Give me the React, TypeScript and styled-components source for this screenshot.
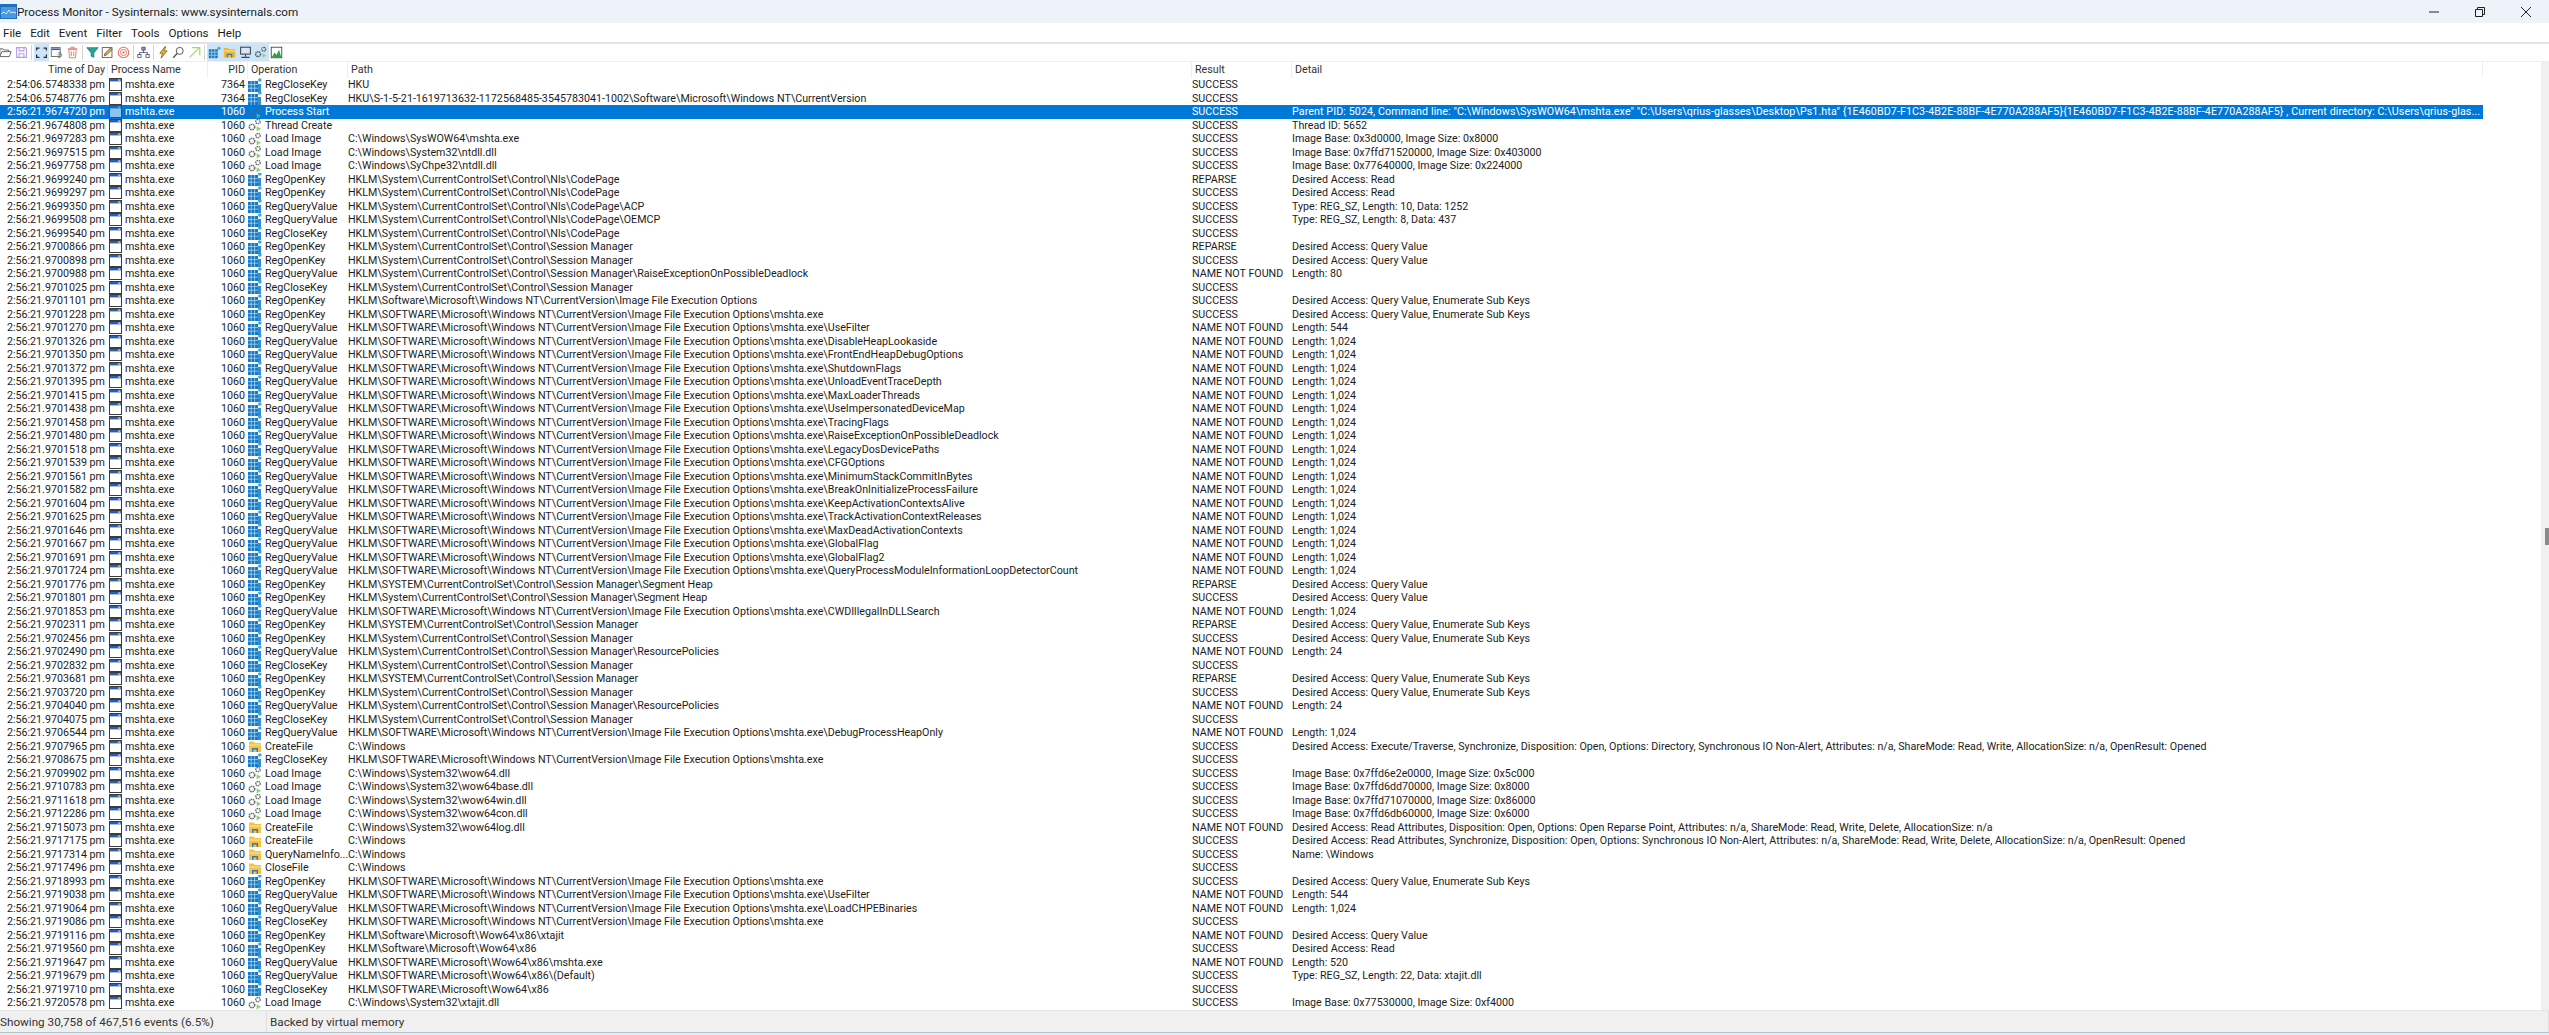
import styled, { createGlobalStyle } from "styled-components";

const GlobalStyle = createGlobalStyle`
  *, *::before, *::after {
    box-sizing: border-box;
  }

  html, body {
    margin: 0;
    padding: 0;
    background: #fff;
    overflow: hidden;
  }
`;

const COLUMNS = "108px 100px 40px 100px 844px 100px 1191px";

const Window = styled.div`
  width: 2549px;
  height: 1035px;
  display: flex;
  flex-direction: column;
  font-family: Roboto, "Noto Sans", sans-serif;
  color: #1c1c1c;
  overflow: hidden;
`;

const TitleBar = styled.div`
  height: 23px;
  flex: none;
  background: #eef3f9;
  display: flex;
  align-items: center;
  font-size: 11.7px;
`;

const TitleText = styled.span`
  flex: 1;
`;

const WinButton = styled.span`
  width: 46px;
  height: 23px;
  display: flex;
  align-items: center;
  justify-content: center;
`;

const MenuBar = styled.div`
  height: 21px;
  flex: none;
  display: flex;
  align-items: center;
  gap: 9px;
  padding-left: 3px;
  font-size: 11.6px;
  border-bottom: 2px solid #e2e2e2;
`;

const Toolbar = styled.div`
  height: 18px;
  flex: none;
  display: flex;
  align-items: center;
  margin-left: -2px;
  border-bottom: 1px solid #eeeeee;
`;

const ToolButton = styled.span<{ $on?: boolean }>`
  width: 15.5px;
  height: 17px;
  flex: none;
  display: flex;
  align-items: center;
  justify-content: center;
  background: ${(p) => (p.$on ? "#cce4f7" : "transparent")};
`;

const ToolSep = styled.span`
  width: 4.5px;
  flex: none;
  display: flex;
  justify-content: center;

  &::before {
    content: "";
    width: 1px;
    height: 15px;
    background: #d4d4d4;
  }
`;

const ToolIcon = styled.svg`
  display: block;
`;

const Main = styled.div`
  flex: 1;
  min-height: 0;
  display: flex;
`;

const ListArea = styled.div`
  flex: 1;
  min-width: 0;
  overflow: hidden;
`;

const HeaderRow = styled.div`
  height: 16px;
  display: grid;
  grid-template-columns: ${COLUMNS};
  font-size: 10.7px;
  line-height: 16px;
  color: #333;
`;

const HeaderCell = styled.div<{ $right?: boolean }>`
  padding: 0 2px 0 3px;
  text-align: ${(p) => (p.$right ? "right" : "left")};
  border-right: 1px solid #eeeeee;
  overflow: hidden;
  white-space: nowrap;
`;

const Rows = styled.div`
  display: grid;
  grid-auto-rows: 13.5px;
  justify-content: start;
`;

const Row = styled.div<{ $selected?: boolean }>`
  display: grid;
  grid-template-columns: ${COLUMNS};
  width: 2483px;
  font-size: 10.7px;
  line-height: 13.5px;
  background: ${(p) => (p.$selected ? "#0078d7" : "transparent")};
  color: ${(p) => (p.$selected ? "#fff" : "#1c1c1c")};
`;

const TextCell = styled.div`
  overflow: hidden;
  white-space: nowrap;
`;

const DetailCell = styled(TextCell)<{ $selected?: boolean }>`
  letter-spacing: ${(p) => (p.$selected ? "0.09px" : "normal")};
`;

const TimeCell = styled(TextCell)`
  text-align: right;
  padding-right: 3px;
`;

const PidCell = styled(TextCell)`
  text-align: right;
  padding-right: 3px;
`;

const IconCell = styled(TextCell)`
  display: flex;
  align-items: center;
  gap: 3px;
`;

const GlyphBox = styled.span<{ $selected?: boolean }>`
  flex: none;
  width: 14px;
  height: 13.5px;
  display: flex;
  align-items: center;
  justify-content: center;
  opacity: ${(p) => (p.$selected ? 0.55 : 1)};
`;

const ScrollTrack = styled.div`
  width: 8px;
  flex: none;
  background: #f0f0f0;
  padding-top: 466px;
  display: flex;
  justify-content: flex-end;
`;

const ScrollThumb = styled.div`
  width: 4px;
  height: 17px;
  background: #8a8a8a;
`;

const StatusBar = styled.div`
  height: 22px;
  flex: none;
  display: flex;
  align-items: center;
  background: #f0f0f0;
  border-top: 1px solid #e4e4e4;
  font-size: 11.7px;
  color: #333;
`;

const StatusPane = styled.div<{ $width: number }>`
  width: ${(p) => p.$width}px;
  height: 100%;
  padding-left: ${(p) => (p.$width > 300 ? 3 : 0)}px;
  display: flex;
  align-items: center;
  border-right: 1px solid #e0e0e0;
  white-space: nowrap;
`;

const BottomEdge = styled.div`
  height: 3px;
  flex: none;
  background: #e3eef8;
  border-top: 1px solid #b8c0c8;
`;

const ProcessIcon = () => (
  <svg width="13" height="13" viewBox="0 0 13 13">
    <rect x="0.5" y="0.5" width="12" height="12" fill="#fff" stroke="#3c3c3c" />
    <rect x="1" y="1" width="11" height="2.4" fill="#2a5bb0" />
    <rect x="9" y="1.5" width="2.4" height="1.2" fill="#cfe0f5" />
  </svg>
);

const RegistryIcon = () => (
  <svg width="14" height="14" viewBox="0 0 14 14">
    <path d="M0 3h10v11H0z" fill="#1478c4" />
    <path d="M3.2 3v11M6.6 3v11M0 6.6h10M0 10.2h10" stroke="#bfe0f5" strokeWidth="0.7" />
    <path d="M10 6h3v8h-3z" fill="#2f8fd6" />
    <circle cx="11.8" cy="2" r="1.8" fill="#34a7e6" />
  </svg>
);

const GearsIcon = () => (
  <svg width="14" height="14" viewBox="0 0 14 14">
    <circle cx="4" cy="9" r="2.7" fill="none" stroke="#6b6b6b" strokeWidth="1.6" strokeDasharray="1.6 0.6" />
    <circle cx="10" cy="3.6" r="2.2" fill="none" stroke="#6b6b6b" strokeWidth="1.4" strokeDasharray="1.4 0.6" />
    <path d="M8.6 8.2l4.4 2.6-4.4 2.8z" fill="#8fd07c" />
  </svg>
);

const FileIcon = () => (
  <svg width="14" height="14" viewBox="0 0 14 14">
    <path d="M1 2.5h4.5l1.5 1.6h6V13H1z" fill="#f6c244" />
    <path d="M1 5.5h12v1.2H1z" fill="#fbe08f" />
    <path d="M4 9h6v4H8.6v-2.6H5.4V13H4z" fill="#2b7cc9" />
  </svg>
);

const opIcons: Record<string, () => React.JSX.Element> = {
  reg: RegistryIcon,
  proc: GearsIcon,
  file: FileIcon,
};

const opKind = (op: string) => {
  if (op.startsWith("Reg")) return "reg";
  if (op.includes("File") || op.startsWith("QueryName")) return "file";
  return "proc";
};

// ---- toolbar icons ----
const toolIcons: Record<string, React.ReactNode> = {
  open: <path d="M1 13V3.5h4l1.2 1.5H12v2M1 13l2.4-6H15l-2.4 6z" fill="none" stroke="#4a4a4a" strokeWidth="1" />,
  save: (
    <g fill="none" stroke="#b79be6" strokeWidth="1.3">
      <path d="M2 2h11l1 1v11H2z" />
      <path d="M5 2v4h6V2M5 14V9.5h6V14" />
    </g>
  ),
  capture: <path d="M2 5.5V2.5h3.5M10.5 2.5H14v3M14 10.5V14h-3.5M5.5 14H2v-3.5" fill="none" stroke="#232f3e" strokeWidth="1.5" />,
  scroll: (
    <g fill="none" strokeWidth="1">
      <rect x="1.5" y="2" width="11" height="11" stroke="#555" />
      <path d="M2 3h10v2H2z" fill="#2a5bb0" stroke="none" />
      <path d="M10 8.5a3 3 0 1 1 -1 4.5M12.5 8v3h-3" stroke="#6d6d6d" />
    </g>
  ),
  clear: (
    <g fill="none" stroke="#e0705e" strokeWidth="1.1">
      <path d="M3.5 4h9l-.7 10.5H4.2zM2 3.5h12M6 3V1.5h4V3M6.5 6.5v6M9.5 6.5v6" />
    </g>
  ),
  filter: <path d="M1 2h14L9.7 8.5V14l-3.4-1.5V8.5z" fill="#2aa39a" stroke="#16736c" strokeWidth="0.8" />,
  edit: (
    <g fill="none">
      <rect x="1.5" y="2" width="12" height="12" stroke="#4a4a4a" />
      <path d="M4 12l1-3 6.5-6.5 2 2L7 11z" fill="#e3b341" stroke="#333" strokeWidth="0.8" />
    </g>
  ),
  target: (
    <g fill="none" stroke="#e8705f">
      <circle cx="8" cy="8" r="6.5" strokeWidth="1.3" />
      <circle cx="8" cy="8" r="3.8" strokeWidth="1.1" />
      <circle cx="8" cy="8" r="1.4" fill="#e8705f" stroke="none" />
    </g>
  ),
  tree: (
    <g fill="#fff" stroke="#47506b" strokeWidth="1">
      <rect x="6" y="1.5" width="4" height="3.5" fill="#8c98b8" />
      <rect x="1" y="10.5" width="4" height="3.5" />
      <rect x="11" y="10.5" width="4" height="3.5" />
      <path d="M8 5v3M3 10.5V8h10v2.5" fill="none" />
    </g>
  ),
  bolt: <path d="M9.5 1L3.5 9h3.4L5 15l7.5-9H8.6L11 1z" fill="#f2b632" stroke="#5b4a1c" strokeWidth="0.8" />,
  find: (
    <g fill="none" stroke="#555" strokeWidth="1.2">
      <circle cx="9.5" cy="6" r="4.3" />
      <path d="M6.3 9.2L1.5 14.5" strokeWidth="1.6" />
    </g>
  ),
  jump: <path d="M2 14L13 3M5 2h9.5v9.5" fill="none" stroke="#a5d86c" strokeWidth="1.5" />,
  regOn: (
    <g>
      <path d="M1 4h11v11H1z" fill="#1478c4" />
      <path d="M4.6 4v11M8.3 4v11M1 7.6h11M1 11.3h11" stroke="#cce4f7" strokeWidth="0.8" />
      <circle cx="13.5" cy="2.8" r="1.9" fill="#34a7e6" />
    </g>
  ),
  fileOn: (
    <g>
      <path d="M1 2.5h5l1.5 1.6H15V14H1z" fill="#f2b632" />
      <path d="M1 5.5h14v1.3H1z" fill="#fbe08f" />
      <path d="M4.5 9.5h7V14H10v-3H6v3H4.5z" fill="#2b7cc9" />
    </g>
  ),
  netOn: (
    <g fill="none" stroke="#3c4655" strokeWidth="1.3">
      <rect x="2" y="1.5" width="12" height="8.5" fill="#dbe6f2" />
      <path d="M8 10v3M3 14h10" />
    </g>
  ),
  procOn: (
    <g fill="none">
      <circle cx="5" cy="10" r="3" stroke="#4b5b6b" strokeWidth="1.8" strokeDasharray="1.8 0.7" />
      <circle cx="12" cy="4" r="2.4" stroke="#4b5b6b" strokeWidth="1.5" strokeDasharray="1.5 0.6" />
      <path d="M10.5 9l4.5 2.7-4.5 2.8z" fill="#8fd07c" />
    </g>
  ),
  profile: (
    <g>
      <rect x="1.5" y="1.5" width="13" height="13" fill="#fff" stroke="#333" />
      <path d="M2 14l3.5-6 2.5 3 3-6.5 3 9.5z" fill="#2f9e44" />
    </g>
  ),
};

type ToolItem = { icon?: string; on?: boolean };

const tools: ToolItem[] = [
  { icon: "open" },
  { icon: "save" },
  {},
  { icon: "capture", on: true },
  { icon: "scroll" },
  { icon: "clear" },
  {},
  { icon: "filter" },
  { icon: "edit" },
  { icon: "target" },
  {},
  { icon: "tree" },
  {},
  { icon: "bolt" },
  { icon: "find" },
  { icon: "jump" },
  {},
  { icon: "regOn", on: true },
  { icon: "fileOn", on: true },
  { icon: "netOn", on: true },
  { icon: "procOn", on: true },
  { icon: "profile" },
];

// ---- event data ----
const NLS = "HKLM\\System\\CurrentControlSet\\Control\\Nls\\CodePage";
const SM = "HKLM\\System\\CurrentControlSet\\Control\\Session Manager";
const SMU = "HKLM\\SYSTEM\\CurrentControlSet\\Control\\Session Manager";
const IFEO = "HKLM\\SOFTWARE\\Microsoft\\Windows NT\\CurrentVersion\\Image File Execution Options\\mshta.exe";
const SYS = "C:\\Windows\\System32\\";
const Q = "Desired Access: Query Value";
const QE = "Desired Access: Query Value, Enumerate Sub Keys";
const OK = "SUCCESS";
const NNF = "NAME NOT FOUND";
const RP = "REPARSE";
const OPEN = "RegOpenKey";
const QV = "RegQueryValue";
const CLOSE = "RegCloseKey";
const LOAD = "Load Image";
const L1K = "Length: 1,024";

type Ev = [string, string, string, string, string];

const events: Ev[] = [
  ["9674808", "Thread Create", "", OK, "Thread ID: 5652"],
  ["9697283", LOAD, "C:\\Windows\\SysWOW64\\mshta.exe", OK, "Image Base: 0x3d0000, Image Size: 0x8000"],
  ["9697515", LOAD, SYS + "ntdll.dll", OK, "Image Base: 0x7ffd71520000, Image Size: 0x403000"],
  ["9697758", LOAD, "C:\\Windows\\SyChpe32\\ntdll.dll", OK, "Image Base: 0x77640000, Image Size: 0x224000"],
  ["9699240", OPEN, NLS, RP, "Desired Access: Read"],
  ["9699297", OPEN, NLS, OK, "Desired Access: Read"],
  ["9699350", QV, NLS + "\\ACP", OK, "Type: REG_SZ, Length: 10, Data: 1252"],
  ["9699508", QV, NLS + "\\OEMCP", OK, "Type: REG_SZ, Length: 8, Data: 437"],
  ["9699540", CLOSE, NLS, OK, ""],
  ["9700866", OPEN, SM, RP, Q],
  ["9700898", OPEN, SM, OK, Q],
  ["9700988", QV, SM + "\\RaiseExceptionOnPossibleDeadlock", NNF, "Length: 80"],
  ["9701025", CLOSE, SM, OK, ""],
  ["9701101", OPEN, "HKLM\\Software\\Microsoft\\Windows NT\\CurrentVersion\\Image File Execution Options", OK, QE],
  ["9701228", OPEN, IFEO, OK, QE],
  ["9701270", QV, IFEO + "\\UseFilter", NNF, "Length: 544"],
  ["9701326", QV, IFEO + "\\DisableHeapLookaside", NNF, L1K],
  ["9701350", QV, IFEO + "\\FrontEndHeapDebugOptions", NNF, L1K],
  ["9701372", QV, IFEO + "\\ShutdownFlags", NNF, L1K],
  ["9701395", QV, IFEO + "\\UnloadEventTraceDepth", NNF, L1K],
  ["9701415", QV, IFEO + "\\MaxLoaderThreads", NNF, L1K],
  ["9701438", QV, IFEO + "\\UseImpersonatedDeviceMap", NNF, L1K],
  ["9701458", QV, IFEO + "\\TracingFlags", NNF, L1K],
  ["9701480", QV, IFEO + "\\RaiseExceptionOnPossibleDeadlock", NNF, L1K],
  ["9701518", QV, IFEO + "\\LegacyDosDevicePaths", NNF, L1K],
  ["9701539", QV, IFEO + "\\CFGOptions", NNF, L1K],
  ["9701561", QV, IFEO + "\\MinimumStackCommitInBytes", NNF, L1K],
  ["9701582", QV, IFEO + "\\BreakOnInitializeProcessFailure", NNF, L1K],
  ["9701604", QV, IFEO + "\\KeepActivationContextsAlive", NNF, L1K],
  ["9701625", QV, IFEO + "\\TrackActivationContextReleases", NNF, L1K],
  ["9701646", QV, IFEO + "\\MaxDeadActivationContexts", NNF, L1K],
  ["9701667", QV, IFEO + "\\GlobalFlag", NNF, L1K],
  ["9701691", QV, IFEO + "\\GlobalFlag2", NNF, L1K],
  ["9701724", QV, IFEO + "\\QueryProcessModuleInformationLoopDetectorCount", NNF, L1K],
  ["9701776", OPEN, SMU + "\\Segment Heap", RP, Q],
  ["9701801", OPEN, SM + "\\Segment Heap", OK, Q],
  ["9701853", QV, IFEO + "\\CWDIllegalInDLLSearch", NNF, L1K],
  ["9702311", OPEN, SMU, RP, QE],
  ["9702456", OPEN, SM, OK, QE],
  ["9702490", QV, SM + "\\ResourcePolicies", NNF, "Length: 24"],
  ["9702832", CLOSE, SM, OK, ""],
  ["9703681", OPEN, SMU, RP, QE],
  ["9703720", OPEN, SM, OK, QE],
  ["9704040", QV, SM + "\\ResourcePolicies", NNF, "Length: 24"],
  ["9704075", CLOSE, SM, OK, ""],
  ["9706544", QV, IFEO + "\\DebugProcessHeapOnly", NNF, L1K],
  ["9707965", "CreateFile", "C:\\Windows", OK, "Desired Access: Execute/Traverse, Synchronize, Disposition: Open, Options: Directory, Synchronous IO Non-Alert, Attributes: n/a, ShareMode: Read, Write, AllocationSize: n/a, OpenResult: Opened"],
  ["9708675", CLOSE, IFEO, OK, ""],
  ["9709902", LOAD, SYS + "wow64.dll", OK, "Image Base: 0x7ffd6e2e0000, Image Size: 0x5c000"],
  ["9710783", LOAD, SYS + "wow64base.dll", OK, "Image Base: 0x7ffd6dd70000, Image Size: 0x8000"],
  ["9711618", LOAD, SYS + "wow64win.dll", OK, "Image Base: 0x7ffd71070000, Image Size: 0x86000"],
  ["9712286", LOAD, SYS + "wow64con.dll", OK, "Image Base: 0x7ffd6db60000, Image Size: 0x6000"],
  ["9715073", "CreateFile", SYS + "wow64log.dll", NNF, "Desired Access: Read Attributes, Disposition: Open, Options: Open Reparse Point, Attributes: n/a, ShareMode: Read, Write, Delete, AllocationSize: n/a"],
  ["9717175", "CreateFile", "C:\\Windows", OK, "Desired Access: Read Attributes, Synchronize, Disposition: Open, Options: Synchronous IO Non-Alert, Attributes: n/a, ShareMode: Read, Write, Delete, AllocationSize: n/a, OpenResult: Opened"],
  ["9717314", "QueryNameInfo...", "C:\\Windows", OK, "Name: \\Windows"],
  ["9717496", "CloseFile", "C:\\Windows", OK, ""],
  ["9718993", OPEN, IFEO, OK, QE],
  ["9719038", QV, IFEO + "\\UseFilter", NNF, "Length: 544"],
  ["9719064", QV, IFEO + "\\LoadCHPEBinaries", NNF, L1K],
  ["9719086", CLOSE, IFEO, OK, ""],
  ["9719116", OPEN, "HKLM\\Software\\Microsoft\\Wow64\\x86\\xtajit", NNF, Q],
  ["9719560", OPEN, "HKLM\\Software\\Microsoft\\Wow64\\x86", OK, "Desired Access: Read"],
  ["9719647", QV, "HKLM\\SOFTWARE\\Microsoft\\Wow64\\x86\\mshta.exe", NNF, "Length: 520"],
  ["9719679", QV, "HKLM\\SOFTWARE\\Microsoft\\Wow64\\x86\\(Default)", OK, "Type: REG_SZ, Length: 22, Data: xtajit.dll"],
  ["9719710", CLOSE, "HKLM\\SOFTWARE\\Microsoft\\Wow64\\x86", OK, ""],
  ["9720578", LOAD, SYS + "xtajit.dll", OK, "Image Base: 0x77530000, Image Size: 0xf4000"],
];

type RowData = { time: string; pid: string; op: string; path: string; result: string; detail: string; selected?: boolean };

const rows: RowData[] = [
  { time: "2:54:06.5748338", pid: "7364", op: CLOSE, path: "HKU", result: OK, detail: "" },
  {
    time: "2:54:06.5748776",
    pid: "7364",
    op: CLOSE,
    path: "HKU\\S-1-5-21-1619713632-1172568485-3545783041-1002\\Software\\Microsoft\\Windows NT\\CurrentVersion",
    result: OK,
    detail: "",
  },
  {
    time: "2:56:21.9674720",
    pid: "1060",
    op: "Process Start",
    path: "",
    result: OK,
    detail:
      'Parent PID: 5024, Command line: "C:\\Windows\\SysWOW64\\mshta.exe" "C:\\Users\\qrius-glasses\\Desktop\\Ps1.hta" {1E460BD7-F1C3-4B2E-88BF-4E770A288AF5}{1E460BD7-F1C3-4B2E-88BF-4E770A288AF5} , Current directory: C:\\Users\\qrius-glas...',
    selected: true,
  },
  ...events.map(([t, op, path, result, detail]) => ({
    time: "2:56:21." + t,
    pid: "1060",
    op,
    path,
    result,
    detail,
  })),
];

const EventRow = ({ row }: { row: RowData }) => {
  const OpIcon = opIcons[opKind(row.op)];
  return (
    <Row $selected={row.selected}>
      <TimeCell>{row.time} pm</TimeCell>
      <IconCell>
        <GlyphBox $selected={row.selected}>
          <ProcessIcon />
        </GlyphBox>
        mshta.exe
      </IconCell>
      <PidCell>{row.pid}</PidCell>
      <IconCell>
        <GlyphBox $selected={row.selected}>
          <OpIcon />
        </GlyphBox>
        {row.op}
      </IconCell>
      <TextCell>{row.path}</TextCell>
      <TextCell>{row.result}</TextCell>
      <DetailCell $selected={row.selected}>{row.detail}</DetailCell>
    </Row>
  );
};

export default function App() {
  return (
    <Window>
      <GlobalStyle />
      <TitleBar>
        <svg width="17" height="15" viewBox="0 0 17 15">
          <rect x="0" y="0" width="17" height="15" fill="#1f6fc0" />
          <rect x="1" y="3" width="15" height="11" fill="#4a9ae0" />
          <path d="M1 10l3-2 2 2 3-4 2 3 2-1 3 1" fill="none" stroke="#d8ecff" strokeWidth="1" />
        </svg>
        <TitleText>Process Monitor - Sysinternals: www.sysinternals.com</TitleText>
        <WinButton>
          <svg width="10" height="10" viewBox="0 0 10 10">
            <path d="M0 5h10" stroke="#222" strokeWidth="1" />
          </svg>
        </WinButton>
        <WinButton>
          <svg width="10" height="10" viewBox="0 0 10 10">
            <path d="M.5 2.5h7v7h-7zM2.5 2.5V.5h7v7h-2" fill="none" stroke="#222" />
          </svg>
        </WinButton>
        <WinButton>
          <svg width="10" height="10" viewBox="0 0 10 10">
            <path d="M0 0l10 10M10 0L0 10" stroke="#222" />
          </svg>
        </WinButton>
      </TitleBar>
      <MenuBar>
        <span>File</span>
        <span>Edit</span>
        <span>Event</span>
        <span>Filter</span>
        <span>Tools</span>
        <span>Options</span>
        <span>Help</span>
      </MenuBar>
      <Toolbar>
        {tools.map((t, i) =>
          t.icon ? (
            <ToolButton key={i} $on={t.on}>
              <ToolIcon width="13" height="13" viewBox="0 0 16 16">
                {toolIcons[t.icon]}
              </ToolIcon>
            </ToolButton>
          ) : (
            <ToolSep key={i} />
          ),
        )}
      </Toolbar>
      <Main>
        <ListArea>
          <HeaderRow>
            <HeaderCell $right>Time of Day</HeaderCell>
            <HeaderCell>Process Name</HeaderCell>
            <HeaderCell $right>PID</HeaderCell>
            <HeaderCell>Operation</HeaderCell>
            <HeaderCell>Path</HeaderCell>
            <HeaderCell>Result</HeaderCell>
            <HeaderCell>Detail</HeaderCell>
          </HeaderRow>
          <Rows>
            {rows.map((r) => (
              <EventRow key={r.time} row={r} />
            ))}
          </Rows>
        </ListArea>
        <ScrollTrack>
          <ScrollThumb />
        </ScrollTrack>
      </Main>
      <StatusBar>
        <StatusPane $width={267}>Showing 30,758 of 467,516 events (6.5%)</StatusPane>
        <StatusPane $width={2282}>Backed by virtual memory</StatusPane>
      </StatusBar>
      <BottomEdge />
    </Window>
  );
}
